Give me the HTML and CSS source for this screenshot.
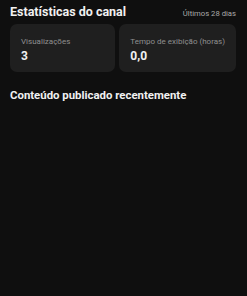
FILE: index.html
```html
<!DOCTYPE html>
<html>
<head>
  <meta charset="UTF-8">
  <title>Estatísticas do canal</title>
  <meta name="viewport" content="width=device-width, initial-scale=1" />
  <link rel="stylesheet" href="styles.css">
</head>
<body>

  <div class="header">
    <h2>Estatísticas do canal</h2>
    <span class="period">Últimos 28 dias</span>
  </div>

  <div class="cards">
    <div class="card">
      <div class="label">Visualizações</div>
      <div class="value">3</div>
    </div>
    <div class="card">
      <div class="label">Tempo de exibição (horas)</div>
      <div class="value">0,0</div>
    </div>
  </div>

  <h2 class="recent">Conteúdo publicado recentemente</h2>

</body>
</html>
```

FILE: styles.css
```css
body {
  margin: 0;
  padding: 0;
  background-color: #0f0f0f;
  color: #f1f1f1;
  font-family: Roboto, "Noto Sans", sans-serif;
  height: 296px;
}
*, *:before, *:after {
  box-sizing: border-box;
}

h2 {
  margin: 0;
  font-size: 12.5px;
  font-weight: 700;
  line-height: 16px;
}

.header {
  display: flex;
  justify-content: space-between;
  align-items: baseline;
  padding: 4px 11px 0 10px;
}

.period {
  font-size: 7.7px;
  color: #aaaaaa;
}

.cards {
  display: grid;
  grid-template-columns: 1fr 1fr;
  gap: 4px;
  padding: 0 11px 0 10px;
  margin-top: 4px;
}

.card {
  height: 48px;
  padding: 13px 11px 0;
  border-radius: 7px;
  background-color: #1f1f1f;
}

.label {
  font-size: 8px;
  line-height: 10px;
  color: #8f8f8f;
  white-space: nowrap;
}

.value {
  margin-top: 2px;
  font-size: 12px;
  font-weight: 700;
  line-height: 14px;
}

.recent {
  padding: 15px 10px 0;
  font-size: 11.4px;
}
```
